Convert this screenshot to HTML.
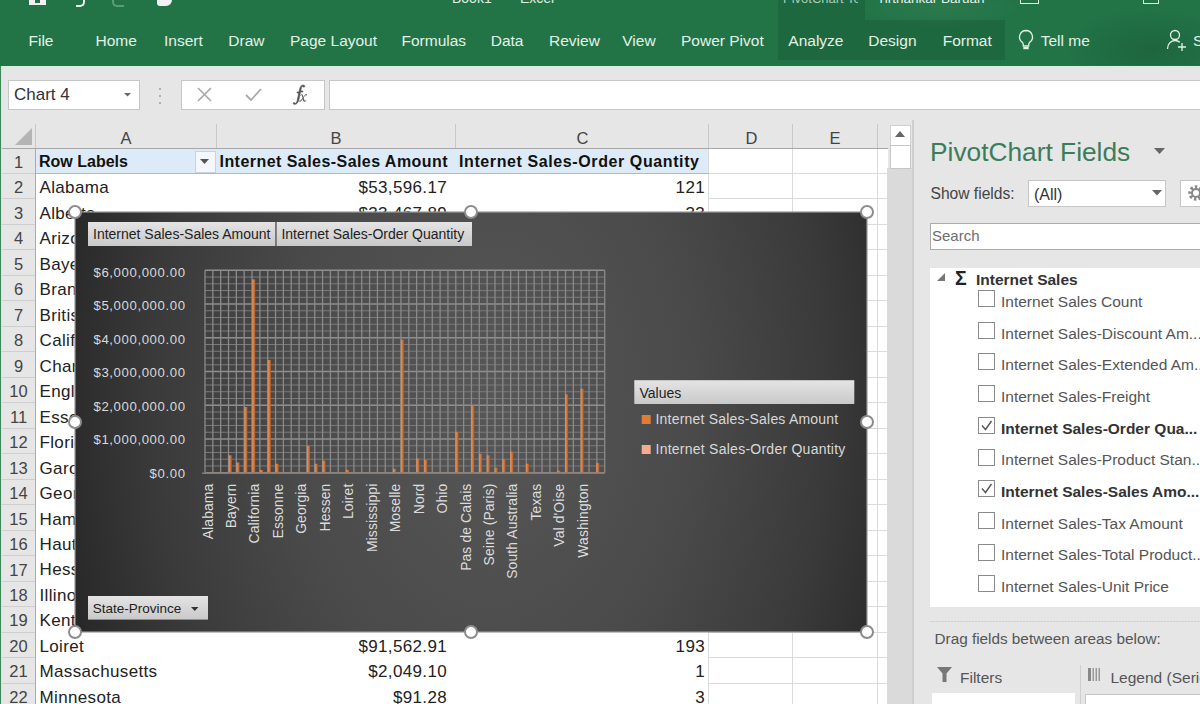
<!DOCTYPE html>
<html><head><meta charset="utf-8"><style>
html,body{margin:0;padding:0;}
body{width:1200px;height:704px;overflow:hidden;position:relative;background:#e6e6e6;font-family:"Liberation Sans", sans-serif;}
.t{position:absolute;white-space:pre;}
.r{position:absolute;}
svg text{font-family:"Liberation Sans", sans-serif;}
</style></head><body>
<div class="r" style="left:0px;top:0px;width:1200px;height:65.5px;background:#227447;"></div>
<div class="r" style="left:1040px;top:0px;width:160px;height:65px;background:radial-gradient(ellipse 90px 45px at 110px 50px, rgba(0,0,0,0.13), rgba(0,0,0,0));"></div>
<div class="r" style="left:860px;top:0px;width:200px;height:30px;background:radial-gradient(ellipse 80px 20px at 80px 8px, rgba(255,255,255,0.04), rgba(255,255,255,0));"></div>
<div class="r" style="left:778px;top:0px;width:87px;height:20px;background:rgba(0,0,0,0.10);"></div>
<div class="r" style="left:778px;top:20px;width:227px;height:40px;background:rgba(0,0,0,0.10);"></div>
<div class="r" style="left:0px;top:65.5px;width:1200px;height:1.5px;background:#d3f2de;"></div>
<div class="r" style="left:0px;top:66px;width:1px;height:638px;background:#3f8a5c;"></div>
<div class="r" style="left:1px;top:66px;width:1px;height:638px;background:#cfe9d6;"></div>
<div class="r" style="left:29px;top:0px;width:17px;height:5px;background:#f2f2f2;"></div>
<div class="r" style="left:35px;top:0px;width:5px;height:2.5px;background:#227447;"></div>
<div class="r" style="left:76px;top:0px;width:7px;height:5px;border-radius:0 0 5px 0;border-right:2px solid #eee;border-bottom:2px solid #eee;"></div>
<div class="r" style="left:112px;top:0px;width:10px;height:5px;border-radius:0 0 0 5px;border-left:2px solid #7fb896;border-bottom:2px solid #7fb896;opacity:.6;"></div>
<div class="r" style="left:157px;top:0px;width:15px;height:6px;background:#f2f2f2;border-radius:0 0 6px 3px;"></div>
<div class="t" style="left:452px;top:-8.85px;font-size:14px;line-height:14px;color:#dff0e4;">Book1</div>
<div class="t" style="left:520px;top:-8.85px;font-size:14px;line-height:14px;color:#dff0e4;">Excel</div>
<div class="t" style="left:783px;top:-8.00px;font-size:13px;line-height:13px;color:#a9cdb5;width:75px;overflow:hidden;">PivotChart Tools</div>
<div class="t" style="left:877px;top:-8.43px;font-size:13.5px;line-height:13.5px;color:#e6f3ea;">Tirthankar Baruah</div>
<div class="r" style="left:1020px;top:0px;width:17px;height:3px;border:1.5px solid #dff0e4;border-top:none;"></div>
<div class="r" style="left:1143px;top:0px;width:14px;height:3px;border:1.5px solid #dff0e4;border-top:none;"></div>
<div class="t" style="left:28.5px;top:32.88px;font-size:15.5px;line-height:15.5px;color:#e3f1e7;">File</div>
<div class="t" style="left:95.5px;top:32.88px;font-size:15.5px;line-height:15.5px;color:#e3f1e7;">Home</div>
<div class="t" style="left:164px;top:32.88px;font-size:15.5px;line-height:15.5px;color:#e3f1e7;">Insert</div>
<div class="t" style="left:228.3px;top:32.88px;font-size:15.5px;line-height:15.5px;color:#e3f1e7;">Draw</div>
<div class="t" style="left:290px;top:32.88px;font-size:15.5px;line-height:15.5px;color:#e3f1e7;">Page Layout</div>
<div class="t" style="left:401.5px;top:32.88px;font-size:15.5px;line-height:15.5px;color:#e3f1e7;">Formulas</div>
<div class="t" style="left:490.7px;top:32.88px;font-size:15.5px;line-height:15.5px;color:#e3f1e7;">Data</div>
<div class="t" style="left:549px;top:32.88px;font-size:15.5px;line-height:15.5px;color:#e3f1e7;">Review</div>
<div class="t" style="left:622.3px;top:32.88px;font-size:15.5px;line-height:15.5px;color:#e3f1e7;">View</div>
<div class="t" style="left:681px;top:32.88px;font-size:15.5px;line-height:15.5px;color:#e3f1e7;">Power Pivot</div>
<div class="t" style="left:788.3px;top:32.88px;font-size:15.5px;line-height:15.5px;color:#e3f1e7;">Analyze</div>
<div class="t" style="left:868.3px;top:32.88px;font-size:15.5px;line-height:15.5px;color:#e3f1e7;">Design</div>
<div class="t" style="left:942.7px;top:32.88px;font-size:15.5px;line-height:15.5px;color:#e3f1e7;">Format</div>
<div class="t" style="left:1040.7px;top:32.88px;font-size:15.5px;line-height:15.5px;color:#e3f1e7;">Tell me</div>
<svg class="r" style="left:1015px;top:28px" width="22" height="24" viewBox="0 0 22 24"><path d="M11 2.5a6.5 6.5 0 0 0-4 11.6c.8.7 1.3 1.6 1.3 2.6v1.3h5.4v-1.3c0-1 .5-1.9 1.3-2.6A6.5 6.5 0 0 0 11 2.5z" fill="none" stroke="#e3f1e7" stroke-width="1.3"/><rect x="8.3" y="19" width="5.4" height="2.2" fill="#e3f1e7"/></svg>
<svg class="r" style="left:1166px;top:28px" width="30" height="24" viewBox="0 0 30 24"><circle cx="9" cy="7" r="4.5" fill="none" stroke="#e3f1e7" stroke-width="1.3"/><path d="M1.5 21c0-5 3.4-8.5 7.5-8.5 2 0 3.6.7 4.8 1.8" fill="none" stroke="#e3f1e7" stroke-width="1.3"/><path d="M16 15v8M12 19h8" stroke="#e3f1e7" stroke-width="1.3"/></svg>
<div class="t" style="left:1193px;top:32.88px;font-size:15.5px;line-height:15.5px;color:#e3f1e7;">S</div>
<div class="r" style="left:2px;top:67px;width:1198px;height:56px;background:#e6e6e6;"></div>
<div class="r" style="left:8px;top:79.5px;width:132px;height:30px;background:#fff;border:1px solid #c6c6c6;box-sizing:border-box;"></div>
<div class="t" style="left:14px;top:86.11px;font-size:17px;line-height:17px;color:#333;">Chart 4</div>
<svg class="r" style="left:123.5px;top:92.5px" width="8" height="5"><path d="M0 0h7l-3.5 3.5z" fill="#666"/></svg>
<div class="r" style="left:158.5px;top:88px;width:2px;height:2px;background:#b0b0b0;"></div>
<div class="r" style="left:158.5px;top:95px;width:2px;height:2px;background:#b0b0b0;"></div>
<div class="r" style="left:158.5px;top:102px;width:2px;height:2px;background:#b0b0b0;"></div>
<div class="r" style="left:180.5px;top:79.5px;width:144px;height:30px;background:#fff;border:1px solid #c6c6c6;box-sizing:border-box;"></div>
<svg class="r" style="left:196px;top:86px" width="18" height="18"><path d="M2 2l13 13M15 2L2 15" stroke="#a8a8a8" stroke-width="1.6"/></svg>
<svg class="r" style="left:244px;top:87px" width="20" height="16"><path d="M2 8l5 5L17 2" fill="none" stroke="#a8a8a8" stroke-width="1.8"/></svg>
<svg class="r" style="left:288px;top:82px" width="24" height="24" viewBox="0 0 24 24"><path d="M16.5 3.6c-.6-.6-1.6-.7-2.6-.2-1.5.8-2.2 2.7-2.6 5.2l-.3 1.4H9.2l-.2 1h1.8l-1.6 7.5c-.4 1.8-1.1 2.7-1.9 2.9-.3 0-.5-.1-.6-.3l-.2-.4c-.6-.4-1.3-.1-1.3.6 0 .8.9 1.2 1.9 1 1.7-.3 3.1-1.8 3.8-4.6l1.6-7.7h2.2l.2-1h-2.2l.4-2c.4-1.7.8-2.6 1.5-2.7.3 0 .4.1.5.3l.2.4c.6.4 1.4.1 1.4-.6 0-.3-.1-.6-.2-.8z" fill="#555" stroke="#555" stroke-width="0.7"/><path d="M13.6 12.2c.9 0 1.2.6 1.5 1.7l.3 1 1.4-1.9c.5-.7 1-.9 1.5-.9.4 0 .7.3.7.6 0 .4-.3.7-.7.7-.3 0-.5-.2-.8-.1l-1.9 2.3.7 2.4c.2.6.4.8.7.8.3 0 .7-.4 1-.8l.3.2c-.6 1-1.2 1.5-1.9 1.5-.8 0-1.1-.5-1.4-1.6l-.3-1.1-1.5 1.9c-.5.6-1 .8-1.4.8-.4 0-.7-.3-.7-.6 0-.4.3-.7.7-.7.3 0 .5.2.8.1l2-2.4-.7-2.3c-.2-.5-.3-.8-.6-.8-.3 0-.7.4-1 .9l-.3-.2c.6-1 1.2-1.5 1.9-1.5z" fill="#555"/></svg>
<div class="r" style="left:328.5px;top:79.5px;width:872px;height:30px;background:#fff;border:1px solid #c6c6c6;border-right:none;box-sizing:border-box;"></div>
<div class="r" style="left:1.5px;top:123px;width:885.5px;height:25px;background:#e6e6e6;"></div>
<svg class="r" style="left:14px;top:126px" width="20" height="20"><path d="M18 2v17H1z" fill="#b4b4b4"/></svg>
<div class="r" style="left:1.5px;top:148px;width:34px;height:556px;background:#e6e6e6;"></div>
<div class="r" style="left:35.5px;top:148px;width:852px;height:556px;background:#fff;"></div>
<div class="r" style="left:215.8px;top:124px;width:1px;height:24px;background:#c8c8c8;"></div>
<div class="r" style="left:454.8px;top:124px;width:1px;height:24px;background:#c8c8c8;"></div>
<div class="r" style="left:707.8px;top:124px;width:1px;height:24px;background:#c8c8c8;"></div>
<div class="r" style="left:791.8px;top:124px;width:1px;height:24px;background:#c8c8c8;"></div>
<div class="r" style="left:876.9px;top:124px;width:1px;height:24px;background:#c8c8c8;"></div>
<div class="r" style="left:35px;top:124px;width:1px;height:24px;background:#c8c8c8;"></div>
<div class="r" style="left:34.5px;top:148px;width:1px;height:556px;background:#ababab;"></div>
<div class="t" style="left:120.5px;top:130.03px;font-size:16.5px;line-height:16.5px;color:#444;">A</div>
<div class="t" style="left:330.5px;top:130.03px;font-size:16.5px;line-height:16.5px;color:#444;">B</div>
<div class="t" style="left:576.5px;top:130.03px;font-size:16.5px;line-height:16.5px;color:#444;">C</div>
<div class="t" style="left:745.5px;top:130.03px;font-size:16.5px;line-height:16.5px;color:#444;">D</div>
<div class="t" style="left:829.5px;top:130.03px;font-size:16.5px;line-height:16.5px;color:#444;">E</div>
<div class="r" style="left:35.5px;top:148.5px;width:673px;height:25px;background:#dcebf7;"></div>
<div class="r" style="left:708.3px;top:172.98px;width:179px;height:1px;background:#dadada;"></div>
<div class="r" style="left:1.5px;top:172.98px;width:33px;height:1px;background:#cfcfcf;"></div>
<div class="r" style="left:708.3px;top:198.46px;width:179px;height:1px;background:#dadada;"></div>
<div class="r" style="left:1.5px;top:198.46px;width:33px;height:1px;background:#cfcfcf;"></div>
<div class="r" style="left:708.3px;top:223.94px;width:179px;height:1px;background:#dadada;"></div>
<div class="r" style="left:1.5px;top:223.94px;width:33px;height:1px;background:#cfcfcf;"></div>
<div class="r" style="left:708.3px;top:249.42000000000002px;width:179px;height:1px;background:#dadada;"></div>
<div class="r" style="left:1.5px;top:249.42000000000002px;width:33px;height:1px;background:#cfcfcf;"></div>
<div class="r" style="left:708.3px;top:274.9px;width:179px;height:1px;background:#dadada;"></div>
<div class="r" style="left:1.5px;top:274.9px;width:33px;height:1px;background:#cfcfcf;"></div>
<div class="r" style="left:708.3px;top:300.38px;width:179px;height:1px;background:#dadada;"></div>
<div class="r" style="left:1.5px;top:300.38px;width:33px;height:1px;background:#cfcfcf;"></div>
<div class="r" style="left:708.3px;top:325.86px;width:179px;height:1px;background:#dadada;"></div>
<div class="r" style="left:1.5px;top:325.86px;width:33px;height:1px;background:#cfcfcf;"></div>
<div class="r" style="left:708.3px;top:351.34000000000003px;width:179px;height:1px;background:#dadada;"></div>
<div class="r" style="left:1.5px;top:351.34000000000003px;width:33px;height:1px;background:#cfcfcf;"></div>
<div class="r" style="left:708.3px;top:376.82px;width:179px;height:1px;background:#dadada;"></div>
<div class="r" style="left:1.5px;top:376.82px;width:33px;height:1px;background:#cfcfcf;"></div>
<div class="r" style="left:708.3px;top:402.3px;width:179px;height:1px;background:#dadada;"></div>
<div class="r" style="left:1.5px;top:402.3px;width:33px;height:1px;background:#cfcfcf;"></div>
<div class="r" style="left:708.3px;top:427.78000000000003px;width:179px;height:1px;background:#dadada;"></div>
<div class="r" style="left:1.5px;top:427.78000000000003px;width:33px;height:1px;background:#cfcfcf;"></div>
<div class="r" style="left:708.3px;top:453.26px;width:179px;height:1px;background:#dadada;"></div>
<div class="r" style="left:1.5px;top:453.26px;width:33px;height:1px;background:#cfcfcf;"></div>
<div class="r" style="left:708.3px;top:478.74px;width:179px;height:1px;background:#dadada;"></div>
<div class="r" style="left:1.5px;top:478.74px;width:33px;height:1px;background:#cfcfcf;"></div>
<div class="r" style="left:708.3px;top:504.22px;width:179px;height:1px;background:#dadada;"></div>
<div class="r" style="left:1.5px;top:504.22px;width:33px;height:1px;background:#cfcfcf;"></div>
<div class="r" style="left:708.3px;top:529.7px;width:179px;height:1px;background:#dadada;"></div>
<div class="r" style="left:1.5px;top:529.7px;width:33px;height:1px;background:#cfcfcf;"></div>
<div class="r" style="left:708.3px;top:555.1800000000001px;width:179px;height:1px;background:#dadada;"></div>
<div class="r" style="left:1.5px;top:555.1800000000001px;width:33px;height:1px;background:#cfcfcf;"></div>
<div class="r" style="left:708.3px;top:580.6600000000001px;width:179px;height:1px;background:#dadada;"></div>
<div class="r" style="left:1.5px;top:580.6600000000001px;width:33px;height:1px;background:#cfcfcf;"></div>
<div class="r" style="left:708.3px;top:606.14px;width:179px;height:1px;background:#dadada;"></div>
<div class="r" style="left:1.5px;top:606.14px;width:33px;height:1px;background:#cfcfcf;"></div>
<div class="r" style="left:708.3px;top:631.62px;width:179px;height:1px;background:#dadada;"></div>
<div class="r" style="left:1.5px;top:631.62px;width:33px;height:1px;background:#cfcfcf;"></div>
<div class="r" style="left:708.3px;top:657.1px;width:179px;height:1px;background:#dadada;"></div>
<div class="r" style="left:1.5px;top:657.1px;width:33px;height:1px;background:#cfcfcf;"></div>
<div class="r" style="left:708.3px;top:682.58px;width:179px;height:1px;background:#dadada;"></div>
<div class="r" style="left:1.5px;top:682.58px;width:33px;height:1px;background:#cfcfcf;"></div>
<div class="r" style="left:708.3px;top:708.0600000000001px;width:179px;height:1px;background:#dadada;"></div>
<div class="r" style="left:1.5px;top:708.0600000000001px;width:33px;height:1px;background:#cfcfcf;"></div>
<div class="r" style="left:707.8px;top:148px;width:1px;height:556px;background:#dadada;"></div>
<div class="r" style="left:791.8px;top:148px;width:1px;height:556px;background:#dadada;"></div>
<div class="r" style="left:876.9px;top:148px;width:1px;height:556px;background:#dadada;"></div>
<div class="r" style="left:35.5px;top:172.67999999999998px;width:673px;height:1.2px;background:#a9bccf;"></div>
<div class="t" style="left:18.5px;top:153.83px;font-size:16.5px;line-height:16.5px;color:#444;transform:translateX(-50%);">1</div>
<div class="t" style="left:18.5px;top:179.31px;font-size:16.5px;line-height:16.5px;color:#444;transform:translateX(-50%);">2</div>
<div class="t" style="left:18.5px;top:204.79px;font-size:16.5px;line-height:16.5px;color:#444;transform:translateX(-50%);">3</div>
<div class="t" style="left:18.5px;top:230.27px;font-size:16.5px;line-height:16.5px;color:#444;transform:translateX(-50%);">4</div>
<div class="t" style="left:18.5px;top:255.75px;font-size:16.5px;line-height:16.5px;color:#444;transform:translateX(-50%);">5</div>
<div class="t" style="left:18.5px;top:281.23px;font-size:16.5px;line-height:16.5px;color:#444;transform:translateX(-50%);">6</div>
<div class="t" style="left:18.5px;top:306.71px;font-size:16.5px;line-height:16.5px;color:#444;transform:translateX(-50%);">7</div>
<div class="t" style="left:18.5px;top:332.19px;font-size:16.5px;line-height:16.5px;color:#444;transform:translateX(-50%);">8</div>
<div class="t" style="left:18.5px;top:357.67px;font-size:16.5px;line-height:16.5px;color:#444;transform:translateX(-50%);">9</div>
<div class="t" style="left:18.5px;top:383.15px;font-size:16.5px;line-height:16.5px;color:#444;transform:translateX(-50%);">10</div>
<div class="t" style="left:18.5px;top:408.63px;font-size:16.5px;line-height:16.5px;color:#444;transform:translateX(-50%);">11</div>
<div class="t" style="left:18.5px;top:434.11px;font-size:16.5px;line-height:16.5px;color:#444;transform:translateX(-50%);">12</div>
<div class="t" style="left:18.5px;top:459.59px;font-size:16.5px;line-height:16.5px;color:#444;transform:translateX(-50%);">13</div>
<div class="t" style="left:18.5px;top:485.07px;font-size:16.5px;line-height:16.5px;color:#444;transform:translateX(-50%);">14</div>
<div class="t" style="left:18.5px;top:510.55px;font-size:16.5px;line-height:16.5px;color:#444;transform:translateX(-50%);">15</div>
<div class="t" style="left:18.5px;top:536.03px;font-size:16.5px;line-height:16.5px;color:#444;transform:translateX(-50%);">16</div>
<div class="t" style="left:18.5px;top:561.51px;font-size:16.5px;line-height:16.5px;color:#444;transform:translateX(-50%);">17</div>
<div class="t" style="left:18.5px;top:586.99px;font-size:16.5px;line-height:16.5px;color:#444;transform:translateX(-50%);">18</div>
<div class="t" style="left:18.5px;top:612.47px;font-size:16.5px;line-height:16.5px;color:#444;transform:translateX(-50%);">19</div>
<div class="t" style="left:18.5px;top:637.95px;font-size:16.5px;line-height:16.5px;color:#444;transform:translateX(-50%);">20</div>
<div class="t" style="left:18.5px;top:663.43px;font-size:16.5px;line-height:16.5px;color:#444;transform:translateX(-50%);">21</div>
<div class="t" style="left:18.5px;top:688.91px;font-size:16.5px;line-height:16.5px;color:#444;transform:translateX(-50%);">22</div>
<div class="t" style="left:39px;top:154.46px;font-size:16px;line-height:16px;color:#111;font-weight:700;">Row Labels</div>
<div class="t" style="left:219.5px;top:154.46px;font-size:16px;line-height:16px;color:#111;font-weight:700;letter-spacing:0.45px;">Internet Sales-Sales Amount</div>
<div class="t" style="left:459px;top:154.46px;font-size:16px;line-height:16px;color:#111;font-weight:700;letter-spacing:0.6px;">Internet Sales-Order Quantity</div>
<div class="t" style="left:39.5px;top:179.29px;font-size:17px;line-height:17px;color:#222;letter-spacing:0.35px;">Alabama</div>
<div class="t" style="right:753px;top:179.29px;font-size:17px;line-height:17px;color:#222;letter-spacing:0.35px;">$53,596.17</div>
<div class="t" style="right:495px;top:179.29px;font-size:17px;line-height:17px;color:#222;letter-spacing:0.35px;">121</div>
<div class="t" style="left:39.5px;top:204.77px;font-size:17px;line-height:17px;color:#222;letter-spacing:0.35px;">Alberta</div>
<div class="t" style="right:753px;top:204.77px;font-size:17px;line-height:17px;color:#222;letter-spacing:0.35px;">$33,467.89</div>
<div class="t" style="right:495px;top:204.77px;font-size:17px;line-height:17px;color:#222;letter-spacing:0.35px;">33</div>
<div class="t" style="left:39.5px;top:230.25px;font-size:17px;line-height:17px;color:#222;letter-spacing:0.35px;">Arizona</div>
<div class="t" style="right:753px;top:230.25px;font-size:17px;line-height:17px;color:#222;letter-spacing:0.35px;">$35,682.43</div>
<div class="t" style="right:495px;top:230.25px;font-size:17px;line-height:17px;color:#222;letter-spacing:0.35px;">69</div>
<div class="t" style="left:39.5px;top:255.73px;font-size:17px;line-height:17px;color:#222;letter-spacing:0.35px;">Bayern</div>
<div class="t" style="right:753px;top:255.73px;font-size:17px;line-height:17px;color:#222;letter-spacing:0.35px;">$544,320.11</div>
<div class="t" style="right:495px;top:255.73px;font-size:17px;line-height:17px;color:#222;letter-spacing:0.35px;">1,115</div>
<div class="t" style="left:39.5px;top:281.21px;font-size:17px;line-height:17px;color:#222;letter-spacing:0.35px;">Brandenburg</div>
<div class="t" style="right:753px;top:281.21px;font-size:17px;line-height:17px;color:#222;letter-spacing:0.35px;">$321,457.62</div>
<div class="t" style="right:495px;top:281.21px;font-size:17px;line-height:17px;color:#222;letter-spacing:0.35px;">640</div>
<div class="t" style="left:39.5px;top:306.69px;font-size:17px;line-height:17px;color:#222;letter-spacing:0.35px;">British Columbia</div>
<div class="t" style="right:753px;top:306.69px;font-size:17px;line-height:17px;color:#222;letter-spacing:0.35px;">$1,956,073.48</div>
<div class="t" style="right:495px;top:306.69px;font-size:17px;line-height:17px;color:#222;letter-spacing:0.35px;">3,981</div>
<div class="t" style="left:39.5px;top:332.17px;font-size:17px;line-height:17px;color:#222;letter-spacing:0.35px;">California</div>
<div class="t" style="right:753px;top:332.17px;font-size:17px;line-height:17px;color:#222;letter-spacing:0.35px;">$5,735,879.54</div>
<div class="t" style="right:495px;top:332.17px;font-size:17px;line-height:17px;color:#222;letter-spacing:0.35px;">11,724</div>
<div class="t" style="left:39.5px;top:357.65px;font-size:17px;line-height:17px;color:#222;letter-spacing:0.35px;">Charente-Maritime</div>
<div class="t" style="right:753px;top:357.65px;font-size:17px;line-height:17px;color:#222;letter-spacing:0.35px;">$67,112.16</div>
<div class="t" style="right:495px;top:357.65px;font-size:17px;line-height:17px;color:#222;letter-spacing:0.35px;">108</div>
<div class="t" style="left:39.5px;top:383.13px;font-size:17px;line-height:17px;color:#222;letter-spacing:0.35px;">England</div>
<div class="t" style="right:753px;top:383.13px;font-size:17px;line-height:17px;color:#222;letter-spacing:0.35px;">$3,391,712.21</div>
<div class="t" style="right:495px;top:383.13px;font-size:17px;line-height:17px;color:#222;letter-spacing:0.35px;">5,797</div>
<div class="t" style="left:39.5px;top:408.61px;font-size:17px;line-height:17px;color:#222;letter-spacing:0.35px;">Essonne</div>
<div class="t" style="right:753px;top:408.61px;font-size:17px;line-height:17px;color:#222;letter-spacing:0.35px;">$312,108.67</div>
<div class="t" style="right:495px;top:408.61px;font-size:17px;line-height:17px;color:#222;letter-spacing:0.35px;">593</div>
<div class="t" style="left:39.5px;top:434.09px;font-size:17px;line-height:17px;color:#222;letter-spacing:0.35px;">Florida</div>
<div class="t" style="right:753px;top:434.09px;font-size:17px;line-height:17px;color:#222;letter-spacing:0.35px;">$35,247.69</div>
<div class="t" style="right:495px;top:434.09px;font-size:17px;line-height:17px;color:#222;letter-spacing:0.35px;">52</div>
<div class="t" style="left:39.5px;top:459.57px;font-size:17px;line-height:17px;color:#222;letter-spacing:0.35px;">Garonne (Haute)</div>
<div class="t" style="right:753px;top:459.57px;font-size:17px;line-height:17px;color:#222;letter-spacing:0.35px;">$33,745.92</div>
<div class="t" style="right:495px;top:459.57px;font-size:17px;line-height:17px;color:#222;letter-spacing:0.35px;">58</div>
<div class="t" style="left:39.5px;top:485.05px;font-size:17px;line-height:17px;color:#222;letter-spacing:0.35px;">Georgia</div>
<div class="t" style="right:753px;top:485.05px;font-size:17px;line-height:17px;color:#222;letter-spacing:0.35px;">$31,281.19</div>
<div class="t" style="right:495px;top:485.05px;font-size:17px;line-height:17px;color:#222;letter-spacing:0.35px;">57</div>
<div class="t" style="left:39.5px;top:510.53px;font-size:17px;line-height:17px;color:#222;letter-spacing:0.35px;">Hamburg</div>
<div class="t" style="right:753px;top:510.53px;font-size:17px;line-height:17px;color:#222;letter-spacing:0.35px;">$811,489.38</div>
<div class="t" style="right:495px;top:510.53px;font-size:17px;line-height:17px;color:#222;letter-spacing:0.35px;">1,632</div>
<div class="t" style="left:39.5px;top:536.01px;font-size:17px;line-height:17px;color:#222;letter-spacing:0.35px;">Hauts de Seine</div>
<div class="t" style="right:753px;top:536.01px;font-size:17px;line-height:17px;color:#222;letter-spacing:0.35px;">$311,367.04</div>
<div class="t" style="right:495px;top:536.01px;font-size:17px;line-height:17px;color:#222;letter-spacing:0.35px;">637</div>
<div class="t" style="left:39.5px;top:561.49px;font-size:17px;line-height:17px;color:#222;letter-spacing:0.35px;">Hessen</div>
<div class="t" style="right:753px;top:561.49px;font-size:17px;line-height:17px;color:#222;letter-spacing:0.35px;">$378,462.08</div>
<div class="t" style="right:495px;top:561.49px;font-size:17px;line-height:17px;color:#222;letter-spacing:0.35px;">733</div>
<div class="t" style="left:39.5px;top:586.97px;font-size:17px;line-height:17px;color:#222;letter-spacing:0.35px;">Illinois</div>
<div class="t" style="right:753px;top:586.97px;font-size:17px;line-height:17px;color:#222;letter-spacing:0.35px;">$34,684.63</div>
<div class="t" style="right:495px;top:586.97px;font-size:17px;line-height:17px;color:#222;letter-spacing:0.35px;">64</div>
<div class="t" style="left:39.5px;top:612.45px;font-size:17px;line-height:17px;color:#222;letter-spacing:0.35px;">Kentucky</div>
<div class="t" style="right:753px;top:612.45px;font-size:17px;line-height:17px;color:#222;letter-spacing:0.35px;">$20,314.84</div>
<div class="t" style="right:495px;top:612.45px;font-size:17px;line-height:17px;color:#222;letter-spacing:0.35px;">35</div>
<div class="t" style="left:39.5px;top:637.93px;font-size:17px;line-height:17px;color:#222;letter-spacing:0.35px;">Loiret</div>
<div class="t" style="right:753px;top:637.93px;font-size:17px;line-height:17px;color:#222;letter-spacing:0.35px;">$91,562.91</div>
<div class="t" style="right:495px;top:637.93px;font-size:17px;line-height:17px;color:#222;letter-spacing:0.35px;">193</div>
<div class="t" style="left:39.5px;top:663.41px;font-size:17px;line-height:17px;color:#222;letter-spacing:0.35px;">Massachusetts</div>
<div class="t" style="right:753px;top:663.41px;font-size:17px;line-height:17px;color:#222;letter-spacing:0.35px;">$2,049.10</div>
<div class="t" style="right:495px;top:663.41px;font-size:17px;line-height:17px;color:#222;letter-spacing:0.35px;">1</div>
<div class="t" style="left:39.5px;top:688.89px;font-size:17px;line-height:17px;color:#222;letter-spacing:0.35px;">Minnesota</div>
<div class="t" style="right:753px;top:688.89px;font-size:17px;line-height:17px;color:#222;letter-spacing:0.35px;">$91.28</div>
<div class="t" style="right:495px;top:688.89px;font-size:17px;line-height:17px;color:#222;letter-spacing:0.35px;">3</div>
<div class="r" style="left:1.5px;top:147.6px;width:886px;height:1.2px;background:#a8a8a8;"></div>
<div class="r" style="left:194.5px;top:150.5px;width:21px;height:22.5px;background:#f4f8fc;border:1px solid #c9d3de;box-sizing:border-box;"></div>
<svg class="r" style="left:200px;top:159px" width="10" height="6"><path d="M0 0h9l-4.5 5z" fill="#555"/></svg>
<div class="r" style="left:887.3px;top:168px;width:25px;height:536px;background:#dadada;"></div>
<div class="r" style="left:889.5px;top:124.5px;width:21.5px;height:21px;background:#fff;border:1px solid #d0d0d0;box-sizing:border-box;"></div>
<svg class="r" style="left:895px;top:131px" width="11" height="7"><path d="M0 6h10L5 0z" fill="#666"/></svg>
<div class="r" style="left:889.5px;top:145px;width:21.5px;height:23.5px;background:#fff;border:1px solid #c6c6c6;box-sizing:border-box;"></div>
<div class="r" style="left:912px;top:120px;width:2px;height:584px;background:#cfcfcf;"></div>
<div class="t" style="left:930px;top:139.24px;font-size:26.3px;line-height:26.3px;color:#3b7d59;">PivotChart Fields</div>
<svg class="r" style="left:1154px;top:148px" width="12" height="8"><path d="M0 0h11l-5.5 6z" fill="#666"/></svg>
<div class="t" style="left:930.5px;top:186.29px;font-size:15.6px;line-height:15.6px;color:#444;">Show fields:</div>
<div class="r" style="left:1027.5px;top:179.5px;width:138.5px;height:27.5px;background:#fff;border:1px solid #c6c6c6;box-sizing:border-box;"></div>
<div class="t" style="left:1034px;top:186.96px;font-size:16px;line-height:16px;color:#333;">(All)</div>
<svg class="r" style="left:1152px;top:190px" width="11" height="7"><path d="M0 0h10l-5 5.5z" fill="#666"/></svg>
<div class="r" style="left:1179.5px;top:179.5px;width:30px;height:27.5px;background:#fff;border:1px solid #c6c6c6;box-sizing:border-box;"></div>
<svg class="r" style="left:1184px;top:183px" width="16" height="20" viewBox="0 0 16 20"><circle cx="12" cy="10" r="6" fill="none" stroke="#888" stroke-width="3.5" stroke-dasharray="2.4 2"/><circle cx="12" cy="10" r="4" fill="none" stroke="#888" stroke-width="2"/></svg>
<div class="r" style="left:930px;top:222.5px;width:280px;height:27px;background:#fff;border:1px solid #ababab;box-sizing:border-box;"></div>
<div class="t" style="left:932px;top:227.80px;font-size:15px;line-height:15px;color:#6e6e6e;">Search</div>
<div class="r" style="left:929.5px;top:268px;width:271px;height:339px;background:#fff;"></div>
<svg class="r" style="left:936px;top:272px" width="10" height="10"><path d="M9 1v8H1z" fill="#777"/></svg>
<div class="t" style="left:955px;top:269.49px;font-size:19.5px;line-height:19.5px;color:#222;font-weight:700;font-family:"Liberation Serif",serif;">&#931;</div>
<div class="t" style="left:976px;top:272.38px;font-size:15.5px;line-height:15.5px;color:#333;font-weight:700;">Internet Sales</div>
<div class="r" style="left:978px;top:290.0px;width:17px;height:17px;border:1.2px solid #8a8a8a;background:#fff;box-sizing:border-box;"></div>
<div class="t" style="left:1001px;top:293.88px;font-size:15.5px;line-height:15.5px;color:#555;">Internet Sales Count</div>
<div class="r" style="left:978px;top:321.7px;width:17px;height:17px;border:1.2px solid #8a8a8a;background:#fff;box-sizing:border-box;"></div>
<div class="t" style="left:1001px;top:325.58px;font-size:15.5px;line-height:15.5px;color:#555;">Internet Sales-Discount Am...</div>
<div class="r" style="left:978px;top:353.4px;width:17px;height:17px;border:1.2px solid #8a8a8a;background:#fff;box-sizing:border-box;"></div>
<div class="t" style="left:1001px;top:357.28px;font-size:15.5px;line-height:15.5px;color:#555;">Internet Sales-Extended Am...</div>
<div class="r" style="left:978px;top:385.1px;width:17px;height:17px;border:1.2px solid #8a8a8a;background:#fff;box-sizing:border-box;"></div>
<div class="t" style="left:1001px;top:388.98px;font-size:15.5px;line-height:15.5px;color:#555;">Internet Sales-Freight</div>
<div class="r" style="left:978px;top:416.8px;width:17px;height:17px;border:1.2px solid #8a8a8a;background:#fff;box-sizing:border-box;"></div>
<svg class="r" style="left:980px;top:418.8px" width="13" height="13"><path d="M2 6.5l3.5 4L11.5 2" fill="none" stroke="#555" stroke-width="1.4"/></svg>
<div class="t" style="left:1001px;top:420.68px;font-size:15.5px;line-height:15.5px;color:#333;font-weight:700;">Internet Sales-Order Qua...</div>
<div class="r" style="left:978px;top:448.5px;width:17px;height:17px;border:1.2px solid #8a8a8a;background:#fff;box-sizing:border-box;"></div>
<div class="t" style="left:1001px;top:452.38px;font-size:15.5px;line-height:15.5px;color:#555;">Internet Sales-Product Stan...</div>
<div class="r" style="left:978px;top:480.2px;width:17px;height:17px;border:1.2px solid #8a8a8a;background:#fff;box-sizing:border-box;"></div>
<svg class="r" style="left:980px;top:482.2px" width="13" height="13"><path d="M2 6.5l3.5 4L11.5 2" fill="none" stroke="#555" stroke-width="1.4"/></svg>
<div class="t" style="left:1001px;top:484.08px;font-size:15.5px;line-height:15.5px;color:#333;font-weight:700;">Internet Sales-Sales Amo...</div>
<div class="r" style="left:978px;top:511.9px;width:17px;height:17px;border:1.2px solid #8a8a8a;background:#fff;box-sizing:border-box;"></div>
<div class="t" style="left:1001px;top:515.78px;font-size:15.5px;line-height:15.5px;color:#555;">Internet Sales-Tax Amount</div>
<div class="r" style="left:978px;top:543.6px;width:17px;height:17px;border:1.2px solid #8a8a8a;background:#fff;box-sizing:border-box;"></div>
<div class="t" style="left:1001px;top:547.48px;font-size:15.5px;line-height:15.5px;color:#555;">Internet Sales-Total Product...</div>
<div class="r" style="left:978px;top:575.3px;width:17px;height:17px;border:1.2px solid #8a8a8a;background:#fff;box-sizing:border-box;"></div>
<div class="t" style="left:1001px;top:579.18px;font-size:15.5px;line-height:15.5px;color:#555;">Internet Sales-Unit Price</div>
<div class="r" style="left:930px;top:620.5px;width:270px;height:1px;background:repeating-linear-gradient(90deg,#cfcfcf 0 2px,#e0e0e0 2px 3px);"></div>
<div class="t" style="left:934.5px;top:630.55px;font-size:15.3px;line-height:15.3px;color:#555;">Drag fields between areas below:</div>
<svg class="r" style="left:936px;top:666px" width="17" height="17" viewBox="0 0 17 17"><path d="M1 1h15l-5.5 6.5V16H6.5V7.5z" fill="#777"/></svg>
<div class="t" style="left:960px;top:669.88px;font-size:15.5px;line-height:15.5px;color:#555;">Filters</div>
<div class="r" style="left:1080.3px;top:664.5px;width:1px;height:40px;background:#cfcfcf;"></div>
<svg class="r" style="left:1088px;top:668px" width="14" height="14"><rect x="0" y="0" width="3" height="13" fill="#888"/><rect x="4.5" y="0" width="1.5" height="13" fill="#999"/><rect x="7.5" y="0" width="1.5" height="13" fill="#999"/><rect x="10.5" y="0" width="1.5" height="13" fill="#999"/></svg>
<div class="t" style="left:1110.5px;top:669.88px;font-size:15.5px;line-height:15.5px;color:#555;">Legend (Series)</div>
<div class="r" style="left:932px;top:693px;width:143px;height:12px;background:#fff;"></div>
<div class="r" style="left:1084.5px;top:693.5px;width:120px;height:12px;background:#fff;border:1px solid #c6c6c6;box-sizing:border-box;"></div>
<svg class="r" style="left:0;top:0" width="1200" height="704" viewBox="0 0 1200 704"><defs>
<radialGradient id="bg" cx="490" cy="400" r="450" gradientUnits="userSpaceOnUse" gradientTransform="translate(490 400) scale(1 1.5) translate(-490 -400)">
<stop offset="0" stop-color="#575757"/><stop offset="0.45" stop-color="#4a4a4a"/><stop offset="0.75" stop-color="#3a3a3a"/><stop offset="1" stop-color="#262626"/></radialGradient>
<linearGradient id="btn" x1="0" y1="0" x2="0" y2="1"><stop offset="0" stop-color="#e4e4e4"/><stop offset="1" stop-color="#c9c9c9"/></linearGradient>
<linearGradient id="bar" x1="0" y1="0" x2="1" y2="0"><stop offset="0" stop-color="#eb965e"/><stop offset="0.5" stop-color="#d8773a"/><stop offset="1" stop-color="#a85a28"/></linearGradient>
</defs><rect x="75" y="212" width="792" height="420" fill="url(#bg)" stroke="#9a9a9a" stroke-width="1.2"/><line x1="205" y1="270.30" x2="604.7" y2="270.30" stroke="#8f8f8f" stroke-width="1.4"/><line x1="205" y1="277.05" x2="604.7" y2="277.05" stroke="#7a7a7a" stroke-width="1"/><line x1="205" y1="283.79" x2="604.7" y2="283.79" stroke="#7a7a7a" stroke-width="1"/><line x1="205" y1="290.54" x2="604.7" y2="290.54" stroke="#7a7a7a" stroke-width="1"/><line x1="205" y1="297.29" x2="604.7" y2="297.29" stroke="#7a7a7a" stroke-width="1"/><line x1="205" y1="304.03" x2="604.7" y2="304.03" stroke="#8f8f8f" stroke-width="1.4"/><line x1="205" y1="310.78" x2="604.7" y2="310.78" stroke="#7a7a7a" stroke-width="1"/><line x1="205" y1="317.53" x2="604.7" y2="317.53" stroke="#7a7a7a" stroke-width="1"/><line x1="205" y1="324.27" x2="604.7" y2="324.27" stroke="#7a7a7a" stroke-width="1"/><line x1="205" y1="331.02" x2="604.7" y2="331.02" stroke="#7a7a7a" stroke-width="1"/><line x1="205" y1="337.77" x2="604.7" y2="337.77" stroke="#8f8f8f" stroke-width="1.4"/><line x1="205" y1="344.51" x2="604.7" y2="344.51" stroke="#7a7a7a" stroke-width="1"/><line x1="205" y1="351.26" x2="604.7" y2="351.26" stroke="#7a7a7a" stroke-width="1"/><line x1="205" y1="358.01" x2="604.7" y2="358.01" stroke="#7a7a7a" stroke-width="1"/><line x1="205" y1="364.75" x2="604.7" y2="364.75" stroke="#7a7a7a" stroke-width="1"/><line x1="205" y1="371.50" x2="604.7" y2="371.50" stroke="#8f8f8f" stroke-width="1.4"/><line x1="205" y1="378.25" x2="604.7" y2="378.25" stroke="#7a7a7a" stroke-width="1"/><line x1="205" y1="384.99" x2="604.7" y2="384.99" stroke="#7a7a7a" stroke-width="1"/><line x1="205" y1="391.74" x2="604.7" y2="391.74" stroke="#7a7a7a" stroke-width="1"/><line x1="205" y1="398.49" x2="604.7" y2="398.49" stroke="#7a7a7a" stroke-width="1"/><line x1="205" y1="405.23" x2="604.7" y2="405.23" stroke="#8f8f8f" stroke-width="1.4"/><line x1="205" y1="411.98" x2="604.7" y2="411.98" stroke="#7a7a7a" stroke-width="1"/><line x1="205" y1="418.73" x2="604.7" y2="418.73" stroke="#7a7a7a" stroke-width="1"/><line x1="205" y1="425.47" x2="604.7" y2="425.47" stroke="#7a7a7a" stroke-width="1"/><line x1="205" y1="432.22" x2="604.7" y2="432.22" stroke="#7a7a7a" stroke-width="1"/><line x1="205" y1="438.97" x2="604.7" y2="438.97" stroke="#8f8f8f" stroke-width="1.4"/><line x1="205" y1="445.71" x2="604.7" y2="445.71" stroke="#7a7a7a" stroke-width="1"/><line x1="205" y1="452.46" x2="604.7" y2="452.46" stroke="#7a7a7a" stroke-width="1"/><line x1="205" y1="459.21" x2="604.7" y2="459.21" stroke="#7a7a7a" stroke-width="1"/><line x1="205" y1="465.95" x2="604.7" y2="465.95" stroke="#7a7a7a" stroke-width="1"/><line x1="205" y1="472.70" x2="604.7" y2="472.70" stroke="#8f8f8f" stroke-width="1.4"/><line x1="205.00" y1="270.3" x2="205.00" y2="472.7" stroke="#8a8a8a" stroke-width="1.3"/><line x1="212.84" y1="270.3" x2="212.84" y2="472.7" stroke="#8a8a8a" stroke-width="1.3"/><line x1="220.67" y1="270.3" x2="220.67" y2="472.7" stroke="#8a8a8a" stroke-width="1.3"/><line x1="228.51" y1="270.3" x2="228.51" y2="472.7" stroke="#8a8a8a" stroke-width="1.3"/><line x1="236.35" y1="270.3" x2="236.35" y2="472.7" stroke="#8a8a8a" stroke-width="1.3"/><line x1="244.19" y1="270.3" x2="244.19" y2="472.7" stroke="#8a8a8a" stroke-width="1.3"/><line x1="252.02" y1="270.3" x2="252.02" y2="472.7" stroke="#8a8a8a" stroke-width="1.3"/><line x1="259.86" y1="270.3" x2="259.86" y2="472.7" stroke="#8a8a8a" stroke-width="1.3"/><line x1="267.70" y1="270.3" x2="267.70" y2="472.7" stroke="#8a8a8a" stroke-width="1.3"/><line x1="275.54" y1="270.3" x2="275.54" y2="472.7" stroke="#8a8a8a" stroke-width="1.3"/><line x1="283.37" y1="270.3" x2="283.37" y2="472.7" stroke="#8a8a8a" stroke-width="1.3"/><line x1="291.21" y1="270.3" x2="291.21" y2="472.7" stroke="#8a8a8a" stroke-width="1.3"/><line x1="299.05" y1="270.3" x2="299.05" y2="472.7" stroke="#8a8a8a" stroke-width="1.3"/><line x1="306.88" y1="270.3" x2="306.88" y2="472.7" stroke="#8a8a8a" stroke-width="1.3"/><line x1="314.72" y1="270.3" x2="314.72" y2="472.7" stroke="#8a8a8a" stroke-width="1.3"/><line x1="322.56" y1="270.3" x2="322.56" y2="472.7" stroke="#8a8a8a" stroke-width="1.3"/><line x1="330.40" y1="270.3" x2="330.40" y2="472.7" stroke="#8a8a8a" stroke-width="1.3"/><line x1="338.23" y1="270.3" x2="338.23" y2="472.7" stroke="#8a8a8a" stroke-width="1.3"/><line x1="346.07" y1="270.3" x2="346.07" y2="472.7" stroke="#8a8a8a" stroke-width="1.3"/><line x1="353.91" y1="270.3" x2="353.91" y2="472.7" stroke="#8a8a8a" stroke-width="1.3"/><line x1="361.75" y1="270.3" x2="361.75" y2="472.7" stroke="#8a8a8a" stroke-width="1.3"/><line x1="369.58" y1="270.3" x2="369.58" y2="472.7" stroke="#8a8a8a" stroke-width="1.3"/><line x1="377.42" y1="270.3" x2="377.42" y2="472.7" stroke="#8a8a8a" stroke-width="1.3"/><line x1="385.26" y1="270.3" x2="385.26" y2="472.7" stroke="#8a8a8a" stroke-width="1.3"/><line x1="393.09" y1="270.3" x2="393.09" y2="472.7" stroke="#8a8a8a" stroke-width="1.3"/><line x1="400.93" y1="270.3" x2="400.93" y2="472.7" stroke="#8a8a8a" stroke-width="1.3"/><line x1="408.77" y1="270.3" x2="408.77" y2="472.7" stroke="#8a8a8a" stroke-width="1.3"/><line x1="416.61" y1="270.3" x2="416.61" y2="472.7" stroke="#8a8a8a" stroke-width="1.3"/><line x1="424.44" y1="270.3" x2="424.44" y2="472.7" stroke="#8a8a8a" stroke-width="1.3"/><line x1="432.28" y1="270.3" x2="432.28" y2="472.7" stroke="#8a8a8a" stroke-width="1.3"/><line x1="440.12" y1="270.3" x2="440.12" y2="472.7" stroke="#8a8a8a" stroke-width="1.3"/><line x1="447.95" y1="270.3" x2="447.95" y2="472.7" stroke="#8a8a8a" stroke-width="1.3"/><line x1="455.79" y1="270.3" x2="455.79" y2="472.7" stroke="#8a8a8a" stroke-width="1.3"/><line x1="463.63" y1="270.3" x2="463.63" y2="472.7" stroke="#8a8a8a" stroke-width="1.3"/><line x1="471.47" y1="270.3" x2="471.47" y2="472.7" stroke="#8a8a8a" stroke-width="1.3"/><line x1="479.30" y1="270.3" x2="479.30" y2="472.7" stroke="#8a8a8a" stroke-width="1.3"/><line x1="487.14" y1="270.3" x2="487.14" y2="472.7" stroke="#8a8a8a" stroke-width="1.3"/><line x1="494.98" y1="270.3" x2="494.98" y2="472.7" stroke="#8a8a8a" stroke-width="1.3"/><line x1="502.82" y1="270.3" x2="502.82" y2="472.7" stroke="#8a8a8a" stroke-width="1.3"/><line x1="510.65" y1="270.3" x2="510.65" y2="472.7" stroke="#8a8a8a" stroke-width="1.3"/><line x1="518.49" y1="270.3" x2="518.49" y2="472.7" stroke="#8a8a8a" stroke-width="1.3"/><line x1="526.33" y1="270.3" x2="526.33" y2="472.7" stroke="#8a8a8a" stroke-width="1.3"/><line x1="534.16" y1="270.3" x2="534.16" y2="472.7" stroke="#8a8a8a" stroke-width="1.3"/><line x1="542.00" y1="270.3" x2="542.00" y2="472.7" stroke="#8a8a8a" stroke-width="1.3"/><line x1="549.84" y1="270.3" x2="549.84" y2="472.7" stroke="#8a8a8a" stroke-width="1.3"/><line x1="557.68" y1="270.3" x2="557.68" y2="472.7" stroke="#8a8a8a" stroke-width="1.3"/><line x1="565.51" y1="270.3" x2="565.51" y2="472.7" stroke="#8a8a8a" stroke-width="1.3"/><line x1="573.35" y1="270.3" x2="573.35" y2="472.7" stroke="#8a8a8a" stroke-width="1.3"/><line x1="581.19" y1="270.3" x2="581.19" y2="472.7" stroke="#8a8a8a" stroke-width="1.3"/><line x1="589.03" y1="270.3" x2="589.03" y2="472.7" stroke="#8a8a8a" stroke-width="1.3"/><line x1="596.86" y1="270.3" x2="596.86" y2="472.7" stroke="#8a8a8a" stroke-width="1.3"/><line x1="604.70" y1="270.3" x2="604.70" y2="472.7" stroke="#8a8a8a" stroke-width="1.3"/><rect x="228.76" y="455.30" width="3.0" height="17.40" fill="url(#bar)"/><rect x="236.58" y="462.50" width="3.0" height="10.20" fill="url(#bar)"/><rect x="244.40" y="407.00" width="3.0" height="65.70" fill="url(#bar)"/><rect x="252.22" y="279.40" width="3.0" height="193.30" fill="url(#bar)"/><rect x="260.04" y="470.00" width="3.0" height="2.70" fill="url(#bar)"/><rect x="267.86" y="360.00" width="3.0" height="112.70" fill="url(#bar)"/><rect x="275.68" y="463.75" width="3.0" height="8.95" fill="url(#bar)"/><rect x="306.96" y="446.00" width="3.0" height="26.70" fill="url(#bar)"/><rect x="314.78" y="463.75" width="3.0" height="8.95" fill="url(#bar)"/><rect x="322.60" y="460.60" width="3.0" height="12.10" fill="url(#bar)"/><rect x="346.06" y="469.80" width="3.0" height="2.90" fill="url(#bar)"/><rect x="392.98" y="468.75" width="3.0" height="3.95" fill="url(#bar)"/><rect x="400.80" y="339.70" width="3.0" height="133.00" fill="url(#bar)"/><rect x="416.44" y="458.40" width="3.0" height="14.30" fill="url(#bar)"/><rect x="424.26" y="460.00" width="3.0" height="12.70" fill="url(#bar)"/><rect x="455.54" y="431.90" width="3.0" height="40.80" fill="url(#bar)"/><rect x="471.18" y="405.30" width="3.0" height="67.40" fill="url(#bar)"/><rect x="479.00" y="453.75" width="3.0" height="18.95" fill="url(#bar)"/><rect x="486.82" y="455.30" width="3.0" height="17.40" fill="url(#bar)"/><rect x="494.64" y="467.80" width="3.0" height="4.90" fill="url(#bar)"/><rect x="502.46" y="459.00" width="3.0" height="13.70" fill="url(#bar)"/><rect x="510.28" y="451.60" width="3.0" height="21.10" fill="url(#bar)"/><rect x="525.92" y="463.75" width="3.0" height="8.95" fill="url(#bar)"/><rect x="557.20" y="470.50" width="3.0" height="2.20" fill="url(#bar)"/><rect x="565.02" y="394.40" width="3.0" height="78.30" fill="url(#bar)"/><rect x="580.66" y="388.75" width="3.0" height="83.95" fill="url(#bar)"/><rect x="596.30" y="463.00" width="3.0" height="9.70" fill="url(#bar)"/><line x1="202" y1="473.2" x2="604.7" y2="473.2" stroke="#8a7a70" stroke-width="1.5"/><text x="185.6" y="277.00" text-anchor="end" font-size="13.2" letter-spacing="0.6" fill="#d9d9d9">$6,000,000.00</text><text x="185.6" y="310.45" text-anchor="end" font-size="13.2" letter-spacing="0.6" fill="#d9d9d9">$5,000,000.00</text><text x="185.6" y="343.90" text-anchor="end" font-size="13.2" letter-spacing="0.6" fill="#d9d9d9">$4,000,000.00</text><text x="185.6" y="377.35" text-anchor="end" font-size="13.2" letter-spacing="0.6" fill="#d9d9d9">$3,000,000.00</text><text x="185.6" y="410.80" text-anchor="end" font-size="13.2" letter-spacing="0.6" fill="#d9d9d9">$2,000,000.00</text><text x="185.6" y="444.25" text-anchor="end" font-size="13.2" letter-spacing="0.6" fill="#d9d9d9">$1,000,000.00</text><text x="185.6" y="477.70" text-anchor="end" font-size="13.2" letter-spacing="0.6" fill="#d9d9d9">$0.00</text><text transform="translate(212.50 483.6) rotate(-90)" x="0" y="0" text-anchor="end" font-size="13.9" letter-spacing="0.12" fill="#dcdcdc">Alabama</text><text transform="translate(235.96 483.6) rotate(-90)" x="0" y="0" text-anchor="end" font-size="13.9" letter-spacing="0.12" fill="#dcdcdc">Bayern</text><text transform="translate(259.42 483.6) rotate(-90)" x="0" y="0" text-anchor="end" font-size="13.9" letter-spacing="0.12" fill="#dcdcdc">California</text><text transform="translate(282.88 483.6) rotate(-90)" x="0" y="0" text-anchor="end" font-size="13.9" letter-spacing="0.12" fill="#dcdcdc">Essonne</text><text transform="translate(306.34 483.6) rotate(-90)" x="0" y="0" text-anchor="end" font-size="13.9" letter-spacing="0.12" fill="#dcdcdc">Georgia</text><text transform="translate(329.80 483.6) rotate(-90)" x="0" y="0" text-anchor="end" font-size="13.9" letter-spacing="0.12" fill="#dcdcdc">Hessen</text><text transform="translate(353.26 483.6) rotate(-90)" x="0" y="0" text-anchor="end" font-size="13.9" letter-spacing="0.12" fill="#dcdcdc">Loiret</text><text transform="translate(376.72 483.6) rotate(-90)" x="0" y="0" text-anchor="end" font-size="13.9" letter-spacing="0.12" fill="#dcdcdc">Mississippi</text><text transform="translate(400.18 483.6) rotate(-90)" x="0" y="0" text-anchor="end" font-size="13.9" letter-spacing="0.12" fill="#dcdcdc">Moselle</text><text transform="translate(423.64 483.6) rotate(-90)" x="0" y="0" text-anchor="end" font-size="13.9" letter-spacing="0.12" fill="#dcdcdc">Nord</text><text transform="translate(447.10 483.6) rotate(-90)" x="0" y="0" text-anchor="end" font-size="13.9" letter-spacing="0.12" fill="#dcdcdc">Ohio</text><text transform="translate(470.56 483.6) rotate(-90)" x="0" y="0" text-anchor="end" font-size="13.9" letter-spacing="0.12" fill="#dcdcdc">Pas de Calais</text><text transform="translate(494.02 483.6) rotate(-90)" x="0" y="0" text-anchor="end" font-size="13.9" letter-spacing="0.12" fill="#dcdcdc">Seine (Paris)</text><text transform="translate(517.48 483.6) rotate(-90)" x="0" y="0" text-anchor="end" font-size="13.9" letter-spacing="0.12" fill="#dcdcdc">South Australia</text><text transform="translate(540.94 483.6) rotate(-90)" x="0" y="0" text-anchor="end" font-size="13.9" letter-spacing="0.12" fill="#dcdcdc">Texas</text><text transform="translate(564.40 483.6) rotate(-90)" x="0" y="0" text-anchor="end" font-size="13.9" letter-spacing="0.12" fill="#dcdcdc">Val d&#39;Oise</text><text transform="translate(587.86 483.6) rotate(-90)" x="0" y="0" text-anchor="end" font-size="13.9" letter-spacing="0.12" fill="#dcdcdc">Washington</text><rect x="88" y="222" width="187" height="24" fill="url(#btn)"/><rect x="276.5" y="222" width="195.5" height="24" fill="url(#btn)"/><line x1="275.8" y1="222" x2="275.8" y2="246" stroke="#7a7a7a" stroke-width="1.5"/><text x="93" y="239.3" font-size="14" fill="#222">Internet Sales-Sales Amount</text><text x="281.4" y="239.3" font-size="14" fill="#222">Internet Sales-Order Quantity</text><rect x="88" y="596" width="120" height="23.6" fill="url(#btn)"/><text x="92.7" y="613" font-size="13.5" fill="#222">State-Province</text><path d="M191 607h7.5l-3.75 4z" fill="#333"/><rect x="634.3" y="380.2" width="220" height="23.8" fill="url(#btn)"/><text x="639.5" y="397.5" font-size="14" fill="#222">Values</text><rect x="641.7" y="415" width="9" height="9" fill="#e27b36"/><text x="655.5" y="424" font-size="14" letter-spacing="0.2" fill="#d9d9d9">Internet Sales-Sales Amount</text><rect x="641.7" y="445" width="9" height="9" fill="#f4ac8c"/><text x="655.5" y="454" font-size="14" letter-spacing="0.25" fill="#d9d9d9">Internet Sales-Order Quantity</text><circle cx="75" cy="212" r="6" fill="#fff" stroke="#8c8c8c" stroke-width="2"/><circle cx="471" cy="212" r="6" fill="#fff" stroke="#8c8c8c" stroke-width="2"/><circle cx="867" cy="212" r="6" fill="#fff" stroke="#8c8c8c" stroke-width="2"/><circle cx="75" cy="422" r="6" fill="#fff" stroke="#8c8c8c" stroke-width="2"/><circle cx="867" cy="422" r="6" fill="#fff" stroke="#8c8c8c" stroke-width="2"/><circle cx="75" cy="632" r="6" fill="#fff" stroke="#8c8c8c" stroke-width="2"/><circle cx="471" cy="632" r="6" fill="#fff" stroke="#8c8c8c" stroke-width="2"/><circle cx="867" cy="632" r="6" fill="#fff" stroke="#8c8c8c" stroke-width="2"/></svg>
</body></html>
